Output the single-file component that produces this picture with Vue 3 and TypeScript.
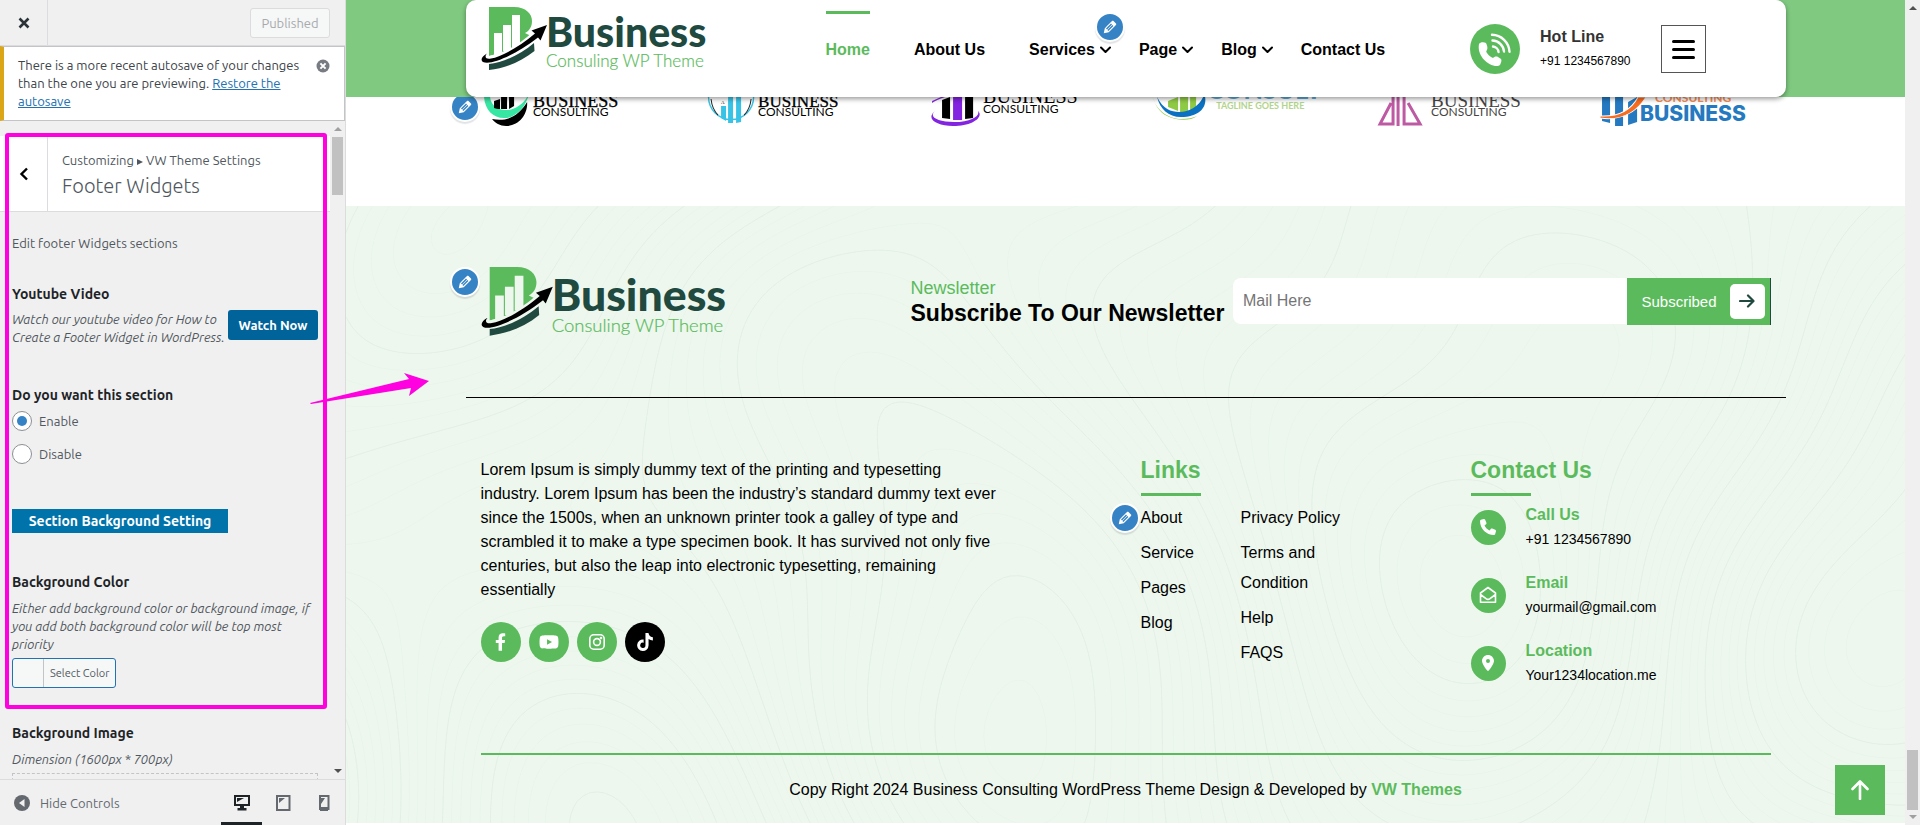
<script setup lang="ts">
import { ref } from 'vue'

interface NavItem { label: string; menu?: boolean; active?: boolean; editable?: boolean }
interface Contact { icon: 'phone' | 'mail' | 'pin'; title: string; value: string }

const navItems: NavItem[] = [
  { label: 'Home', active: true },
  { label: 'About Us' },
  { label: 'Services', menu: true, editable: true },
  { label: 'Page', menu: true },
  { label: 'Blog', menu: true },
  { label: 'Contact Us' },
]
const linksA = ['About', 'Service', 'Pages', 'Blog']
const linksB = ['Privacy Policy', 'Terms and Condition', 'Help', 'FAQS']
const contacts: Contact[] = [
  { icon: 'phone', title: 'Call Us', value: '+91 1234567890' },
  { icon: 'mail', title: 'Email', value: 'yourmail@gmail.com' },
  { icon: 'pin', title: 'Location', value: 'Your1234location.me' },
]
const sectionEnabled = ref('enable')
const email = ref('')

const pencil =
  'M13.89 3.39l2.71 2.72c.46.46.42 1.24.03 1.64l-8.01 8.02-5.56 1.16 1.16-5.58s7.6-7.63 7.99-8.03c.39-.39 1.22-.39 1.68.07zm-2.73 2.79l-5.59 5.61 1.11 1.11 5.54-5.65zm-2.97 8.23l5.58-5.6-1.07-1.08-5.59 5.6z'
const phonePath =
  'M164.9 24.6c-7.7-18.6-28-28.5-47.4-23.2l-88 24C12.1 30.2 0 46 0 64C0 311.4 200.6 512 448 512c18 0 33.8-12.1 38.6-29.5l24-88c5.3-19.4-4.6-39.7-23.2-47.4l-96-40c-16.3-6.8-35.2-2.1-46.3 11.6L304.7 368C234.3 334.7 177.3 277.7 144 207.3L193.3 167c13.7-11.2 18.4-30 11.6-46.3l-40-96z'

/* Topographic backdrop: iso-lines of a smooth height field, traced cell by cell. */
const fieldW = 1560
const fieldH = 618
function height(x: number, y: number): number {
  return (
    3.4 * Math.sin(x / 150 + 0.6 * Math.sin(y / 190)) +
    1.6 * Math.cos(y / 170 + 1.5 * Math.sin(x / 230)) +
    1.1 * Math.sin((x + y) / 120 + 1.1) +
    0.4 * Math.cos((x - 1.4 * y) / 90)
  )
}
function contours(offset: number, step: number): string {
  const c = 7
  let d = ''
  for (let y = 0; y < fieldH; y += c) {
    for (let x = 0; x < fieldW; x += c) {
      const p: [number, number, number][] = [
        [x, y, height(x, y)],
        [x + c, y, height(x + c, y)],
        [x + c, y + c, height(x + c, y + c)],
        [x, y + c, height(x, y + c)],
      ]
      const lo = Math.min(...p.map((q) => q[2]))
      const hi = Math.max(...p.map((q) => q[2]))
      for (let l = Math.ceil((lo - offset) / step) * step + offset; l < hi; l += step) {
        const hits: string[] = []
        for (let i = 0; i < 4; i++) {
          const a = p[i]
          const b = p[(i + 1) % 4]
          if (a[2] < l !== b[2] < l) {
            const t = (l - a[2]) / (b[2] - a[2])
            hits.push(`${(a[0] + t * (b[0] - a[0])).toFixed(1)} ${(a[1] + t * (b[1] - a[1])).toFixed(1)}`)
          }
        }
        for (let k = 0; k + 1 < hits.length; k += 2) d += `M${hits[k]}L${hits[k + 1]}`
      }
    }
  }
  return d
}
const fineLines = contours(0, 0.33)
const boldLines = contours(0, 1.65)
</script>

<template>
  <div class="app">
    <aside class="sidebar">
      <header class="side-head">
        <button class="close" aria-label="Close">
          <svg viewBox="0 0 12 12" width="12" height="12"><path d="M1.5 1.5l9 9M10.5 1.5l-9 9" stroke="#2c3338" stroke-width="2.6" /></svg>
        </button>
        <button class="published" disabled>Published</button>
      </header>
      <div class="notice">
        <p>There is a more recent autosave of your changes than the one you are previewing. <a href="#">Restore the autosave</a></p>
        <button class="dismiss" aria-label="Dismiss">
          <svg viewBox="0 0 14 14" width="14" height="14"><circle cx="7" cy="7" r="6.5" fill="#787c82" /><path d="M4.4 4.4l5.2 5.2M9.6 4.4L4.4 9.6" stroke="#fff" stroke-width="2" /></svg>
        </button>
      </div>
      <div class="side-scroll">
        <div class="controls">
          <div class="panel-title">
            <button class="back" aria-label="Back">
              <svg viewBox="0 0 10 14" width="10" height="14"><path d="M8 1.5L2.5 7 8 12.500" fill="none" stroke="#000" stroke-width="2.4" /></svg>
            </button>
            <div>
              <p class="crumb">Customizing <span class="tri"></span> VW Theme Settings</p>
              <h1>Footer Widgets</h1>
            </div>
          </div>
          <div class="fields">
            <p class="intro">Edit footer Widgets sections</p>
            <section class="video">
              <h2>Youtube Video</h2>
              <div class="video-row">
                <p class="hint">Watch our youtube video for How to Create a Footer Widget in WordPress.</p>
                <button class="watch">Watch Now</button>
              </div>
            </section>
            <fieldset class="toggle">
              <legend>Do you want this section</legend>
              <label><input v-model="sectionEnabled" type="radio" name="section" value="enable" />Enable</label>
              <label><input v-model="sectionEnabled" type="radio" name="section" value="disable" />Disable</label>
            </fieldset>
            <button class="group-head">Section Background Setting</button>
            <section class="bg-color">
              <h2>Background Color</h2>
              <p class="hint">Either add background color or background image, if you add both background color will be top most priority</p>
              <button class="select-color"><span class="swatch"></span><span class="pick">Select Color</span></button>
            </section>
            <section class="bg-image">
              <h2>Background Image</h2>
              <p class="hint">Dimension (1600px * 700px)</p>
              <div class="drop"></div>
            </section>
          </div>
        </div>
        <div class="bar side-bar" aria-hidden="true">
          <span class="up light"></span><span class="thumb side-thumb"></span><span class="down"></span>
        </div>
      </div>
      <footer class="side-foot">
        <button class="collapse">
          <svg viewBox="0 0 16 16" width="16" height="16"><circle cx="8" cy="8" r="8" fill="#646970" /><path d="M10.500 4v8L5 8z" fill="#f0f0f1" /></svg>
          Hide Controls
        </button>
        <div class="devices">
          <button class="device on" aria-label="Desktop">
            <svg viewBox="0 0 16 16" width="16" height="16"><path d="M1 1h14v9H1z" fill="none" stroke="#1d2327" stroke-width="2" /><path d="M3 3h7L3 7zM6 11h4v2h2.500v2.500h-9V13H6z" fill="#1d2327" /></svg>
          </button>
          <button class="device" aria-label="Tablet">
            <svg viewBox="0 0 16 16" width="16" height="16"><path d="M2 1h12.500v14H2z" fill="none" stroke="#646970" stroke-width="2" /><path d="M4 3h6L4 8z" fill="#646970" /></svg>
          </button>
          <button class="device" aria-label="Mobile">
            <svg viewBox="0 0 16 16" width="16" height="16"><path d="M4 1h8.500v13H4z" fill="none" stroke="#646970" stroke-width="2" /><path d="M4 12h8v4H4zM5 3h4L5 9z" fill="#646970" /></svg>
          </button>
        </div>
      </footer>
    </aside>

    <div class="preview">
      <div class="page">
        <div class="hero">
          <header class="container site-head">
            <svg class="logo" viewBox="0 0 228 66" role="img" aria-label="Business Consuling WP Theme">
              <path d="M8 0H33C45 0 51 7 51 14C51 20 48 24 44 26L52 30L30 43L8 49Z" fill="#5bbb5c" />
              <path class="cut" d="M13 26h8v22h-8zM22 18h8v26h-8zM31 8h8v32h-8z" />
              <path class="cut" d="M8 49C24 46 40 36 52 25l4 3-3 8C38 50 20 58 8 57z" />
              <path d="M6 46.500C1 49-1 53 2 55C10 59 36 47 57 30.500L59.500 33.500L66 18L50.500 23.500L54 26.500C38 40 20 50 10 51.500C5 52.500 3 50 6 46.500Z" fill="#000" />
              <path d="M8 57C22 56 40 47 53 36L53.500 44C40 55 24 61 8 63Z" fill="#20493f" />
              <text x="65" y="40" class="brand">Business</text>
              <text x="65" y="60" class="sub">Consuling WP Theme</text>
            </svg>
            <nav>
              <ul>
                <li v-for="item in navItems" :key="item.label" :class="{ active: item.active, menu: item.menu }">
                  <a href="#">{{ item.label }}<svg v-if="item.menu" viewBox="0 0 11 8" width="11" height="8"><path d="M1 1.500L5.500 6 10 1.500" fill="none" stroke="#000" stroke-width="2" stroke-linecap="round" stroke-linejoin="round" /></svg></a>
                  <button v-if="item.editable" class="edit edit-nav" aria-label="Edit menu"><svg viewBox="0 0 20 20"><path :d="pencil" /></svg></button>
                </li>
              </ul>
            </nav>
            <div class="hotline">
              <svg viewBox="0 0 50 50" width="50" height="50">
                <circle cx="25" cy="25" r="25" fill="#5bbb5c" />
                <path d="M9 20c1-2 5-2 7-1 1 2 2 5 1 7-1 1-1 2 0 3 2 3 4 4 6 5 1-1 3-2 5-1l3 2c1 1 0 4-1 6-1 1-3 1-5 1C16 40 7 31 9 20z" fill="#fff" />
                <path d="M23 22.500a6 6 0 0 1 5.500 5.500M22.500 16.500a12 12 0 0 1 11.500 11M22 10.800a18 18 0 0 1 17.500 17" fill="none" stroke="#fff" stroke-width="2.400" stroke-linecap="round" />
              </svg>
              <p><strong>Hot Line</strong><span>+91 1234567890</span></p>
            </div>
            <button class="burger" aria-label="Menu"><i></i><i></i><i></i></button>
          </header>
        </div>

        <section class="clients">
          <div class="container">
            <button class="edit edit-clients" aria-label="Edit clients"><svg viewBox="0 0 20 20"><path :d="pencil" /></svg></button>
            <div class="client-grid">
              <svg viewBox="0 0 173 30" role="img" aria-label="Business Consulting">
                <path d="M3 0h6c1 9 8 13 16 13 9 0 17-6 21-13h1c-4 12-13 21-24 21C12 21 4 13 3 0z" fill="#38e6a4" />
                <path d="M13 4l6-2v10h-2c-2 0-3-1-4-1zM20 0h6v12h-6zM28 0h5v9l-5 3z" fill="#000" />
                <path d="M11 22c14 3 26-2 35-17 1 12-8 24-21 24-6 0-11-3-14-7z" fill="#000" />
                <text x="52" y="10" class="serif">BUSINESS</text><text x="52" y="19" class="caps">CONSULTING</text>
              </svg>
              <svg viewBox="0 0 173 30" role="img" aria-label="Business Consulting">
                <path d="M4.500 0a22.500 22.500 0 0 0 45 0" fill="none" stroke="#3ac2e4" stroke-width="1.400" />
                <path d="M7 2q1 10 7 16M47 2q-1 10-7 16" fill="none" stroke="#222" />
                <path d="M17 9h5v15l-5-3zM24 0h5v26h-5zM32 0h5v25l-5 1z" fill="#38c3e6" />
                <text x="17" y="7" class="tiny">A</text>
                <text x="54" y="10" class="serif small">BUSINESS</text><text x="54" y="19" class="caps">CONSULTING</text>
              </svg>
              <svg viewBox="0 0 173 30" role="img" aria-label="Business Consulting">
                <path d="M5 4l9-4h4C12 2 8 4 5 6z" fill="#8a2be2" />
                <path d="M15 3l8-3v22l-8-1zM38 0h8v21l-8 1z" fill="#000" /><path d="M26 0h9v23h-9z" fill="#8224e0" />
                <path d="M8 14c-7 6 3 11 19 11 17 0 26-6 24-11 6 6-6 15-25 15C10 29-2 22 8 14z" fill="#8224e0" />
                <text x="56" y="6" class="serif big">BUSINESS</text><text x="56" y="16" class="caps">CONSULTING</text>
              </svg>
              <svg viewBox="0 0 173 30" role="img" aria-label="Consult, tagline goes here">
                <path d="M18 4l10-4v14l-10-4zM30 0h8v15h-8zM40 0h6v10l-6 4z" fill="#8fca45" />
                <path d="M7 0c6 12 14 15 22 15 10 0 20-6 24-15h2c2 12-8 20-24 20C18 20 10 12 7 0z" fill="#0b72c2" />
                <path d="M3 0c3 15 18 22 28 22 7 0 12-1 16-3-8 6-22 4-30 0C9 15 5 8 3 0z" fill="#8fca45" />
                <text x="57" y="2" class="consult">CONSULT</text><text x="66" y="12" class="tag">TAGLINE GOES HERE</text>
              </svg>
              <svg viewBox="0 0 173 30" role="img" aria-label="Business Consulting">
                <path d="M17 6L6 27h13V0M24 0v29M30 0v27h16L34 6" fill="none" stroke="#bd5aa3" stroke-width="3" />
                <text x="57" y="10" class="serif grey">BUSINESS</text><text x="57" y="19" class="caps grey">CONSULTING</text>
              </svg>
              <svg viewBox="0 0 173 30" role="img" aria-label="Consulting Business">
                <path d="M5 0h8v26l-8-2zM18 0h8v29h-8zM31 5l9-5v25l-9 3z" fill="#2479c0" />
                <path d="M3 19C22 20 34 13 41 0h8C39 16 23 24 3 21z" fill="#f86c20" stroke="#fff" />
                <text x="58" y="5" class="caps orange">CONSULTING</text><text x="43" y="24" class="blue">BUSINESS</text>
              </svg>
            </div>
          </div>
        </section>

        <footer class="site-foot">
          <svg class="topo" :viewBox="`0 0 ${fieldW} ${fieldH}`" preserveAspectRatio="xMidYMid slice" aria-hidden="true">
            <path :d="fineLines" stroke="#e9f4eb" /><path :d="boldLines" stroke="#e4efe6" />
          </svg>
          <div class="container">
            <div class="newsletter">
              <button class="edit edit-logo" aria-label="Edit logo"><svg viewBox="0 0 20 20"><path :d="pencil" /></svg></button>
              <svg class="logo foot-logo" viewBox="0 0 228 66" role="img" aria-label="Business Consuling WP Theme">
                <path d="M8 0H33C45 0 51 7 51 14C51 20 48 24 44 26L52 30L30 43L8 49Z" fill="#5bbb5c" />
                <path class="cut" d="M13 26h8v22h-8zM22 18h8v26h-8zM31 8h8v32h-8z" />
                <path class="cut" d="M8 49C24 46 40 36 52 25l4 3-3 8C38 50 20 58 8 57z" />
                <path d="M6 46.500C1 49-1 53 2 55C10 59 36 47 57 30.500L59.500 33.500L66 18L50.500 23.500L54 26.500C38 40 20 50 10 51.500C5 52.500 3 50 6 46.500Z" fill="#000" />
                <path d="M8 57C22 56 40 47 53 36L53.500 44C40 55 24 61 8 63Z" fill="#20493f" />
                <text x="65" y="40" class="brand">Business</text>
                <text x="65" y="60" class="sub">Consuling WP Theme</text>
              </svg>
              <div class="news-text">
                <p>Newsletter</p>
                <h2>Subscribe To Our Newsletter</h2>
              </div>
              <form @submit.prevent>
                <input v-model="email" type="email" placeholder="Mail Here" aria-label="Mail Here" />
                <button class="subscribe">
                  Subscribed
                  <span><svg viewBox="0 0 16 14" width="16" height="14"><path d="M1 7h13M9 1.500L14.500 7 9 12.500" fill="none" stroke="#20493f" stroke-width="2.200" stroke-linecap="round" stroke-linejoin="round" /></svg></span>
                </button>
              </form>
            </div>
            <div class="columns">
              <div class="about">
                <p>Lorem Ipsum is simply dummy text of the printing and typesetting industry. Lorem Ipsum has been the industry’s standard dummy text ever since the 1500s, when an unknown printer took a galley of type and scrambled it to make a type specimen book. It has survived not only five centuries, but also the leap into electronic typesetting, remaining essentially</p>
                <div class="social">
                  <a href="#" aria-label="Facebook"><svg viewBox="0 0 320 512" width="11" height="18"><path fill="#fff" d="M279.14 288l14.22-92.66h-88.91v-60.13c0-25.35 12.42-50.06 52.24-50.06h40.42V6.26S260.43 0 225.36 0c-73.22 0-121.08 44.38-121.08 124.72v70.62H22.89V288h81.39v224h100.17V288z" /></svg></a>
                  <a href="#" aria-label="YouTube"><svg viewBox="0 0 576 512" width="20" height="18"><path fill="#fff" d="M549.655 124.083c-6.281-23.65-24.787-42.276-48.284-48.597C458.781 64 288 64 288 64S117.22 64 74.629 75.486c-23.497 6.322-42.003 24.947-48.284 48.597-11.412 42.867-11.412 132.305-11.412 132.305s0 89.438 11.412 132.305c6.281 23.65 24.787 41.5 48.284 47.821C117.22 448 288 448 288 448s170.78 0 213.371-11.486c23.497-6.321 42.003-24.171 48.284-47.821 11.412-42.867 11.412-132.305 11.412-132.305s0-89.438-11.412-132.305zm-317.51 213.508V175.185l142.739 81.205-142.739 81.201z" /></svg></a>
                  <a href="#" aria-label="Instagram"><svg viewBox="0 0 18 18" width="18" height="18" fill="none" stroke="#fff" stroke-width="1.600"><rect x="1.800" y="1.800" width="14.400" height="14.400" rx="4" /><circle cx="9" cy="9" r="3.400" /><circle cx="13" cy="5" r=".5" /></svg></a>
                  <a href="#" class="dark" aria-label="TikTok"><svg viewBox="0 0 448 512" width="16" height="18"><path fill="#fff" d="M448 209.91a210.06 210.06 0 0 1-122.77-39.25V349.38A162.55 162.55 0 1 1 185 188.31V278.2a74.62 74.62 0 1 0 52.23 71.18V0l88 0a121.18 121.18 0 0 0 1.86 22.17h0A122.18 122.18 0 0 0 381 102.39a121.43 121.43 0 0 0 67 20.14z" /></svg></a>
                </div>
              </div>
              <div class="links">
                <h3>Links</h3>
                <button class="edit edit-links" aria-label="Edit links"><svg viewBox="0 0 20 20"><path :d="pencil" /></svg></button>
                <div class="link-cols">
                  <ul><li v-for="l in linksA" :key="l"><a href="#">{{ l }}</a></li></ul>
                  <ul><li v-for="l in linksB" :key="l"><a href="#">{{ l }}</a></li></ul>
                </div>
              </div>
              <div class="contact">
                <h3>Contact Us</h3>
                <ul>
                  <li v-for="c in contacts" :key="c.title">
                    <span class="disc">
                      <svg v-if="c.icon === 'phone'" viewBox="0 0 512 512" width="16" height="16"><path :d="phonePath" fill="#fff" /></svg>
                      <svg v-else-if="c.icon === 'mail'" viewBox="0 0 18 18" width="18" height="18" fill="none" stroke="#fff" stroke-width="1.600" stroke-linejoin="round"><path d="M1.500 7L9 1.500 16.500 7v9.200h-15zM1.500 8.500L7 12.700q2 1.400 4 0l5.500-4.200" /></svg>
                      <svg v-else viewBox="0 0 384 512" width="12" height="16"><path fill="#fff" d="M215.7 499.2C267 435 384 279.4 384 192C384 86 298 0 192 0S0 86 0 192c0 87.400 117 243 168.300 307.200c12.300 15.300 35.100 15.300 47.400 0zM192 128a64 64 0 1 1 0 128 64 64 0 1 1 0-128z" /></svg>
                    </span>
                    <p><strong>{{ c.title }}</strong><span>{{ c.value }}</span></p>
                  </li>
                </ul>
              </div>
            </div>
            <p class="copyright">Copy Right 2024 Business Consulting WordPress Theme Design &amp; Developed by <a href="#">VW Themes</a></p>
          </div>
          <button class="to-top" aria-label="Back to top">
            <svg viewBox="0 0 18 20" width="18" height="20"><path d="M9 19V1.500M1.500 9L9 1.500 16.500 9" fill="none" stroke="#fff" stroke-width="2.600" stroke-linecap="round" stroke-linejoin="round" /></svg>
          </button>
        </footer>
      </div>
      <div class="bar" aria-hidden="true">
        <span class="up"></span><span class="thumb page-thumb"></span><span class="down light"></span>
      </div>
    </div>

    <div class="callout" aria-hidden="true"></div>
    <svg class="arrow" viewBox="0 0 120 32" width="120" height="32" aria-hidden="true"><path d="M0 31L99 7L94 1L119 9L99 24L101 16L1 32Z" fill="#ff00e0" /></svg>
  </div>
</template>

<style>
body { margin: 0; }
</style>

<style scoped>
.app { position: relative; display: flex; height: 100vh; overflow: hidden; font-family: "Liberation Sans", Arial, sans-serif; font-size: 16px; color: #000; background: #fff; }
.app *, .app *::before { box-sizing: border-box; }
p, h1, h2, h3, ul, fieldset { margin: 0; padding: 0; }
ul { list-style: none; }
button { font: inherit; border: 0; padding: 0; background: none; cursor: pointer; }
svg { display: block; flex: none; }

.sidebar { flex: none; width: 18%; min-width: 346px; display: flex; flex-direction: column; background: #f0f0f0; border-right: 1px solid #dcdcde; font-family: Ubuntu, "Open Sans", sans-serif; font-size: 13px; line-height: 18px; color: #50575e; }
.side-head { display: flex; justify-content: space-between; align-items: center; height: 46px; flex: none; border-bottom: 1px solid #dcdcde; padding-right: 15px; }
.close { width: 48px; height: 45px; border-right: 1px solid #dcdcde; display: grid; place-items: center; }
.published { width: 80px; height: 30px; border: 1px solid #dcdcde; border-radius: 3px; background: #f6f7f7; color: #a7aaad; }
.notice { display: flex; flex: none; justify-content: space-between; align-items: flex-start; border: 1px solid #c3c4c7; border-left: 4px solid #dba617; background: #fff; padding: 9px 14px 10px; color: #3c434a; }
.notice p { width: 292px; }
.notice a { color: #2271b1; }
.dismiss { margin-top: 3px; }
.side-scroll { flex: 1; min-height: 0; display: flex; overflow: hidden; }
.controls { flex: 1; min-width: 0; }
.panel-title { display: flex; margin-top: 15px; height: 76px; background: #fff; border-bottom: 1px solid #dcdcde; }
.panel-title > div { padding: 15px 14px 0; }
.back { width: 48px; border-right: 1px solid #dcdcde; display: grid; place-items: center; }
.tri { display: inline-block; border: solid transparent; border-width: 3px 0 3px 6px; border-left-color: #50575e; }
h1 { font-size: 20px; line-height: 34px; font-weight: 200; }
.fields { padding: 22px 12px 0; }
h2, legend { font-size: 14px; line-height: 24px; font-weight: 700; color: #1d2327; padding: 0; }
.hint { font-style: italic; }
.video { margin-top: 30px; }
.video-row { display: flex; justify-content: space-between; align-items: flex-start; padding-top: 4px; }
.watch { flex: none; width: 90px; height: 30px; border-radius: 3px; background: #006399; color: #fff; font-weight: 700; }
.toggle { border: 0; margin-top: 37px; }
.toggle label { display: flex; align-items: center; gap: 7px; height: 20px; margin-top: 4px; }
.toggle label + label { margin-top: 13px; }
.toggle input { appearance: none; margin: 0; width: 20px; height: 20px; border: 1px solid #8c8f94; border-radius: 50%; background: #fff; display: grid; place-items: center; }
.toggle input:checked::before { content: ""; width: 10px; height: 10px; border-radius: 50%; background: #3582c4; }
.group-head { display: block; margin-top: 45px; width: 216px; height: 24px; background: #0073aa; color: #fff; font-size: 14px; font-weight: 700; }
.bg-color { margin-top: 37px; }
.bg-color .hint { margin-top: 5px; }
.select-color { display: flex; margin-top: 5px; height: 30px; border: 1px solid #2271b1; border-radius: 3px; background: #f6f7f7; font-size: 11px; color: #50575e; }
.swatch { width: 31px; height: 28px; border-right: 1px solid #c3c4c7; }
.pick { padding: 0 6px; line-height: 28px; }
.bg-image { margin-top: 33px; }
.bg-image .hint { margin-top: 5px; }
.drop { margin-top: 5px; height: 80px; border: 1px dashed #c3c4c7; }
.side-foot { flex: none; height: 46px; border-top: 1px solid #dcdcde; display: flex; justify-content: space-between; padding: 0 0 0 14px; }
.collapse { display: flex; align-items: center; gap: 10px; color: #646970; }
.devices { display: flex; padding-right: 1px; }
.device { width: 41px; display: grid; place-items: center; border-bottom: 3px solid transparent; border-top: 3px solid transparent; }
.device.on { border-bottom-color: #1d2327; }

.bar { flex: none; width: 15px; background: #f0f0f0; display: flex; flex-direction: column; align-items: center; padding: 6px 0; }
.up, .down { border: 4px solid transparent; border-width: 0 4px 4px; border-bottom-color: #505050; }
.down { border-width: 4px 4px 0; border-top-color: #505050; }
.up.light { border-bottom-color: #a0a0a0; }
.down.light { border-top-color: #a0a0a0; }
.thumb { width: 11px; background: #c1c1c1; }
.side-thumb { height: 58px; margin: 6px 0 auto; }
.page-thumb { height: 60px; margin: auto 0 5px; }

.preview { flex: 1; min-width: 0; display: flex; }
.page { flex: 1; min-width: 0; display: flex; flex-direction: column; padding-bottom: 2px; }
.container { position: relative; width: 85%; max-width: 1320px; margin: 0 auto; }
.hero { position: relative; z-index: 2; background: #7fca80; flex: none; }
.site-head { display: flex; align-items: center; height: 97px; padding: 1px 80px 0 15px; background: #fff; border-radius: 10px; box-shadow: 0 2px 5px rgba(0, 0, 0, 0.4); }
.logo { width: 228px; height: 66px; align-self: flex-start; margin-top: 6px; overflow: visible; --cut: #fff; }
.cut { fill: var(--cut); }
.brand { font: 900 41px Lato, sans-serif; fill: #20493f; }
.sub { font: 300 17px Lato, sans-serif; fill: #5bbb5c; stroke: #5bbb5c; stroke-width: 0.2; }
nav { margin-left: 95px; align-self: stretch; }
nav ul { display: flex; height: 100%; }
nav li { position: relative; display: flex; align-items: center; padding: 2px 22px 0; font-weight: 700; }
nav li.menu { padding-right: 6px; }
nav a { display: flex; align-items: center; gap: 5px; color: #000; text-decoration: none; }
nav .active a { color: #5bbb5c; }
nav .active::before { content: ""; position: absolute; top: 10px; left: 22px; right: 22px; height: 3px; background: #5bbb5c; }
.hotline { display: flex; align-items: center; gap: 20px; margin-left: auto; margin-right: 30px; }
.hotline strong, .hotline span { display: block; line-height: 25px; }
.hotline strong { color: #333; }
.hotline span { font-size: 12px; }
.burger { width: 45px; height: 48px; border: 1px solid #555; display: flex; flex-direction: column; align-items: center; justify-content: center; gap: 5px; }
.burger i { width: 23px; height: 3px; border-radius: 2px; background: #000; }

.edit { position: absolute; width: 30px; height: 30px; border: 2px solid #fff; border-radius: 50%; background: #3582c4; box-shadow: 0 2px 1px rgba(60, 67, 74, 0.15); display: grid; place-items: center; z-index: 3; }
.edit svg { width: 18px; height: 18px; fill: #fff; }
.edit-nav { top: 11px; right: -8px; }
.edit-clients { left: -16px; top: -5px; }
.edit-logo { left: -16px; top: 61px; }
.edit-links { left: -16px; top: 47px; }

.clients { position: relative; height: 109px; flex: none; z-index: 1; }
.client-grid { display: grid; grid-template-columns: repeat(6, 1fr); gap: 50px; padding: 0 15px; }
.client-grid svg { width: 100%; min-width: 0; }
.serif { font: 400 18px "Liberation Serif", serif; stroke: #000; stroke-width: 0.3; }
.serif.small { font-size: 17px; }
.serif.big { font-size: 20px; stroke: none; }
.caps { font: 400 12px Lato, sans-serif; }
.tiny { font: 5px "Liberation Serif", serif; }
.consult { font: 900 25px Lato, sans-serif; fill: #5aaad8; }
.tag { font: 700 9px Lato, sans-serif; fill: #b3d58c; }
.grey { fill: #444; }
.serif.grey { font-size: 19px; stroke: none; }
.caps.orange { font-weight: 700; fill: #f58a52; }
.blue { font: 800 21px Inter, sans-serif; fill: #2479c0; }

.site-foot { position: relative; flex: 1; display: flex; flex-direction: column; background: #edf7ee; overflow: hidden; }
.site-foot .container { flex: 1; display: flex; flex-direction: column; }
.topo { position: absolute; inset: 0; width: 100%; height: 100%; fill: none; }
.newsletter { position: relative; display: grid; grid-template-columns: 4fr 3fr 5fr; align-items: center; padding: 61px 15px 58px; border-bottom: 1px solid #000; }
.foot-logo { width: 248px; height: 72px; margin: 0; --cut: #edf7ee; }
.news-text { white-space: nowrap; padding-bottom: 2px; }
.news-text p { font-size: 18px; line-height: 22px; color: #5bbb5c; }
.news-text h2 { font-size: 23px; line-height: 28px; color: #000; }
form { display: flex; align-items: flex-start; padding-bottom: 4px; }
form input { flex: 1; min-width: 0; height: 46px; border: 0; border-radius: 8px 0 0 8px; background: #fff; padding: 0 10px; font: 16px "Liberation Sans", Arial, sans-serif; }
form input::placeholder { color: #757575; }
.subscribe { display: flex; align-items: center; gap: 13px; height: 47px; padding: 0 5px 0 14px; background: #5bbb5c; border-right: 1px solid #20493f; color: #fff; font-size: 15px; }
.subscribe span { width: 35px; height: 35px; border-radius: 5px; background: #fff; display: grid; place-items: center; }
.columns { flex: 1; display: grid; grid-template-columns: 2fr 1fr 1fr; padding-top: 58px; }
.columns > div { position: relative; padding: 0 15px; }
.about p { max-width: 520px; line-height: 24px; padding-top: 2px; }
.social { display: flex; gap: 8px; margin-top: 20px; }
.social a { width: 40px; height: 40px; border-radius: 50%; background: #5bbb5c; display: grid; place-items: center; }
.social .dark { background: #000; }
h3 { font-size: 23px; line-height: 28px; color: #5bbb5c; padding-bottom: 12px; position: relative; }
h3::before { content: ""; position: absolute; left: 0; bottom: 0; width: 60px; height: 3px; background: #5bbb5c; }
.link-cols { display: grid; grid-template-columns: 1fr 2fr; padding-top: 7px; }
.link-cols ul:last-child { max-width: 120px; }
.link-cols li { line-height: 30px; margin-bottom: 5px; }
.link-cols a { color: #000; text-decoration: none; }
.contact ul { padding-top: 6px; }
.contact li { display: flex; align-items: center; gap: 20px; margin-bottom: 18px; }
.disc { width: 35px; height: 35px; border-radius: 50%; background: #5bbb5c; display: grid; place-items: center; }
.contact strong, .contact p span { display: block; line-height: 25px; }
.contact strong { color: #5bbb5c; }
.contact p span { font-size: 14px; }
.copyright { margin: 0 15px; border-top: 2px solid #5bbb5c; padding: 23px 0 21px; line-height: 24px; text-align: center; }
.copyright a { color: #5bbb5c; font-weight: 700; text-decoration: none; }
.to-top { position: absolute; right: 20px; bottom: 8px; width: 50px; height: 50px; background: #5bbb5c; display: grid; place-items: center; }

.callout { position: absolute; left: 5px; top: 133px; width: 322px; height: 576px; border: 4px solid #ff00e0; border-radius: 3px; pointer-events: none; z-index: 5; }
.arrow { position: absolute; left: 310px; top: 372px; z-index: 6; overflow: visible; pointer-events: none; }
</style>
